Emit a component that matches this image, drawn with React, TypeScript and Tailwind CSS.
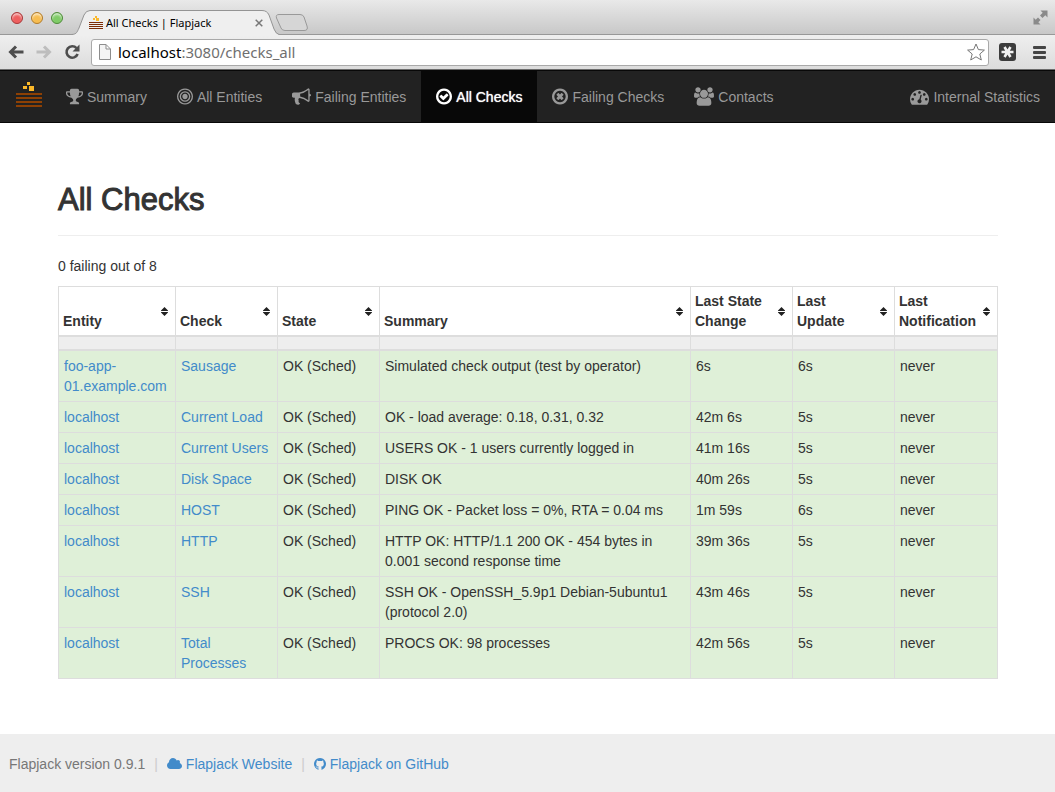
import type { ReactNode } from 'react';

const PATHS = {
  trophy:
    'M522 883q-74-162-74-371h-256v96q0 78 94.500 162t235.500 113zm1078-275v-96h-256q0 209-74 371 141-29 235.500-113t94.500-162zm128-128v128q0 71-41.500 143t-112 130-173 97.500-215.500 44.500q-42 54-95 95-38 34-52.500 72.500t-14.500 89.500q0 54 30.500 91t97.500 37q75 0 133.500 45.500t58.500 114.500v64q0 14-9 23t-23 9h-832q-14 0-23-9t-9-23v-64q0-69 58.500-114.500t133.500-45.500q67 0 97.500-37t30.500-91q0-51-14.500-89.500t-52.500-72.500q-53-41-95-95-113-5-215.500-44.500t-173-97.500-112-130-41.500-143v-128q0-40 28-68t68-28h288v-96q0-66 47-113t113-47h576q66 0 113 47t47 113v96h288q40 0 68 28t28 68z',
  bullseye:
    'M1152 896q0 106-75 181t-181 75-181-75-75-181 75-181 181-75 181 75 75 181zm128 0q0-159-112.500-271.500t-271.500-112.500-271.500 112.500-112.500 271.500 112.500 271.500 271.500 112.500 271.500-112.500 112.500-271.500zm128 0q0 212-150 362t-362 150-362-150-150-362 150-362 362-150 362 150 150 362zm128 0q0-130-51-248.500t-136.500-204-204-136.500-248.500-51-248.500 51-204 136.500-136.500 204-51 248.500 51 248.500 136.500 204 204 136.500 248.500 51 248.500-51 204-136.500 136.500-204 51-248.500zm128 0q0 209-103 385.500t-279.500 279.500-385.500 103-385.500-103-279.500-279.500-103-385.500 103-385.500 279.500-279.500 385.500-103 385.500 103 279.500 279.500 103 385.500z',
  bullhorn:
    'M1664 640q53 0 90.500 37.500t37.500 90.500-37.500 90.500-90.500 37.500v384q0 52-38 90t-90 38q-417-347-812-380-58 19-91 66t-31 100.500 40 92.500q-20 33-23 65.500t6 58 33.500 55 48 50 61.500 50.500q-29 58-111.500 83t-168.500 11.500-132-55.500q-7-23-29.500-87.500t-32-94.500-23-89-15-101 3.500-98 22-110.500h-122q-66 0-113-47t-47-113v-192q0-66 47-113t113-47h480q435 0 896-384 52 0 90 38t38 90v384zm-128 604v-954q-394 302-768 343v270q377 42 768 341z',
  check:
    'M1299 813l-422 422q-19 19-45 19t-45-19l-294-294q-19-19-19-45t19-45l102-102q19-19 45-19t45 19l147 147 275-275q19-19 45-19t45 19l102 102q19 19 19 45t-19 45zm141 83q0-148-73-273t-198-198-273-73-273 73-198 198-73 273 73 273 198 198 273 73 273-73 198-198 73-273zm224 0q0 209-103 385.500t-279.500 279.500-385.500 103-385.500-103-279.500-279.500-103-385.500 103-385.500 279.500-279.500 385.500-103 385.500 103 279.500 279.500 103 385.500z',
  times:
    'M1225 1079l-146 146q-10 10-23 10t-23-10l-137-137-137 137q-10 10-23 10t-23-10l-146-146q-10-10-10-23t10-23l137-137-137-137q-10-10-10-23t10-23l146-146q10-10 23-10t23 10l137 137 137-137q10-10 23-10t23 10l146 146q10 10 10 23t-10 23l-137 137 137 137q10 10 10 23t-10 23zM1440 896q0-148-73-273t-198-198-273-73-273 73-198 198-73 273 73 273 198 198 273 73 273-73 198-198 73-273zm224 0q0 209-103 385.500t-279.500 279.500-385.500 103-385.500-103-279.500-279.500-103-385.500 103-385.500 279.500-279.500 385.500-103 385.500 103 279.500 279.500 103 385.500z',
  users:
    'M593 896q-162 5-265 128h-134q-82 0-138-40.500t-56-118.500q0-353 124-353 6 0 43.500 21t97.500 42.500 119 21.500q67 0 133-23-5 37-5 66 0 139 81 256zm1071 637q0 120-73 189.500t-194 69.500h-874q-121 0-194-69.500t-73-189.500q0-53 3.500-103.500t14-109 26.500-108.500 43-97.500 62-81 85.500-53.500 111.500-20q10 0 43 21.500t73 48 107 48 135 21.500 135-21.500 107-48 73-48 43-21.500q61 0 111.500 20t85.500 53.500 62 81 43 97.500 26.500 108.500 14 109 3.500 103.500zm-1024-1277q0 106-75 181t-181 75-181-75-75-181 75-181 181-75 181 75 75 181zm704 384q0 159-112.500 271.500t-271.500 112.500-271.500-112.500-112.500-271.500 112.500-271.500 271.500-112.500 271.500 112.500 112.500 271.500zm576 225q0 78-56 118.500t-138 40.500h-134q-103-123-265-128 81-117 81-256 0-29-5-66 66 23 133 23 59 0 119-21.500t97.500-42.500 43.500-21q124 0 124 353zm-128-609q0 106-75 181t-181 75-181-75-75-181 75-181 181-75 181 75 75 181z',
  gauge:
    'M384 1152q0-53-37.500-90.500t-90.500-37.500-90.500 37.500-37.500 90.500 37.500 90.500 90.500 37.500 90.500-37.500 37.500-90.500zm192-448q0-53-37.500-90.500t-90.500-37.500-90.500 37.500-37.500 90.500 37.500 90.500 90.500 37.500 90.500-37.500 37.500-90.500zm428 481l101-382q6-26-7.500-48.500t-38.500-29.500-48 6.500-30 39.500l-101 382q-60 5-107 43.500t-63 98.500q-20 77 20 146t117 89 146-20 89-117q16-60-6-117t-72-91zm660-33q0-53-37.500-90.500t-90.500-37.500-90.500 37.500-37.500 90.500 37.500 90.500 90.500 37.500 90.500-37.500 37.500-90.500zm-640-640q0-53-37.500-90.500t-90.500-37.500-90.500 37.500-37.500 90.500 37.500 90.500 90.500 37.500 90.500-37.500 37.500-90.500zm448 192q0-53-37.500-90.500t-90.500-37.500-90.500 37.500-37.500 90.500 37.500 90.500 90.500 37.500 90.500-37.500 37.500-90.500zm320 448q0 261-141 483-19 29-54 29h-1402q-35 0-54-29-141-221-141-483 0-182 71-348t191-286 286-191 348-71 348 71 286 191 191 286 71 348z',
  cloud:
    'M1984 1152q0 159-112.500 271.500t-271.500 112.500h-1088q-185 0-316.500-131.500t-131.500-316.500q0-132 71-241.500t187-163.500q-2-28-2-43 0-212 150-362t362-150q158 0 286.500 88t187.500 230q70-62 166-62 106 0 181 75t75 181q0 75-41 138 129 30 213 134.500t84 239.500z',
  github:
    'M896 128q209 0 385.500 103t279.500 279.500 103 385.500q0 251-146.500 451.500t-378.500 277.500q-27 5-40-7t-13-30q0-3 .5-76.500t.5-134.500q0-97-52-142 57-6 102.500-18t94-39 81-66.500 53-105 20.500-150.500q0-119-79-206 37-91-8-204-28-9-81 11t-92 44l-38 24q-93-26-192-26t-192 26q-16-11-42.500-27t-83.500-38.500-85-13.500q-45 113-8 204-79 87-79 206 0 85 20.500 150t52.500 105 80.500 67 94 39 102.500 18q-39 36-49 103-21 10-45 15t-57 5-65.500-21.500-55.500-62.500q-19-32-48.500-52t-49.500-24l-20-3q-21 0-29 4.500t-5 11.500 9 14 13 12l7 5q22 10 43.500 38t31.500 51l10 23q13 38 44 61.500t67 30 69.500 7 55.500-3.500l23-4q0 38 .5 88.500t.5 54.500q0 18-13 30t-40 7q-232-77-378.500-277.500t-146.500-451.500q0-209 103-385.500t279.500-279.500 385.500-103z',
};

function Glyph({ name, box, className }: { name: keyof typeof PATHS; box: string; className: string }) {
  return (
    <svg viewBox={box} className={`shrink-0 fill-current ${className}`} aria-hidden="true">
      <path d={PATHS[name]} />
    </svg>
  );
}

function PancakeLogo({ className, cake }: { className: string; cake: string }) {
  return (
    <svg viewBox="0 0 26 26" className={className} shapeRendering="crispEdges" aria-hidden="true">
      <g fill={cake}>
        <rect y="11" width="26" height="2" />
        <rect y="15" width="26" height="2" />
        <rect y="19" width="26" height="2" />
        <rect y="23" width="26" height="2" />
      </g>
      <g fill="#fbb829">
        <rect x="11" y="0" width="3" height="3" />
        <rect x="7" y="4" width="4" height="3" />
        <rect x="13" y="4" width="5" height="5" />
      </g>
    </svg>
  );
}

function Light({ className }: { className: string }) {
  return <span className={`h-3 w-3 rounded-full border shadow-[inset_0_2px_2px_rgba(255,255,255,0.6)] ${className}`} />;
}

function BrowserChrome() {
  return (
    <div className="font-['Noto_Sans',sans-serif]">
      <div className="flex h-[35px] items-end border-b border-[#989898] bg-linear-to-b from-[#e9e9e9] to-[#c8c8c8]">
        <div className="flex gap-2 self-center pt-px pl-[11px]">
          <Light className="border-[#a5393a] bg-[#ee5f5f]" />
          <Light className="border-[#b07b2c] bg-[#f7bd51]" />
          <Light className="border-[#4f8a3b] bg-[#80cc68]" />
        </div>
        <div className="relative -mb-px ml-[9px] h-[25px] w-[207px]">
          <svg viewBox="0 0 207 25" className="absolute inset-0 h-full w-full" aria-hidden="true">
            <path d="M0 24.500C5 24 5 22 7 18L12 5Q14 .5 18 .5H190Q195 .5 197 5L202 19Q204 24 207 24.500V25H0z" fill="#efefef" />
            <path d="M0 24.500C5 24 5 22 7 18L12 5Q14 .5 18 .5H190Q195 .5 197 5L202 19Q204 24 207 24.500" fill="none" stroke="#949494" />
          </svg>
          <div className="relative flex h-full items-center pr-4 pl-[17px] text-[11px] text-black">
            <PancakeLogo className="mr-[3px] h-[14px] w-[14px]" cake="#7c2d07" />
            <span className="grow whitespace-nowrap">All Checks | Flapjack</span>
            <button type="button" aria-label="Close tab">
              <svg viewBox="0 0 8 8" className="h-2 w-2" stroke="#777" strokeWidth="1.500">
                <path d="M.7 .7l6.600 6.600M7.300 .7l-6.600 6.600" />
              </svg>
            </button>
          </div>
        </div>
        <button type="button" aria-label="New tab" className="-ml-1 mb-[3px]">
          <svg viewBox="0 0 34 17" className="h-[17px] w-[34px]" aria-hidden="true">
            <path d="M4 .5H25Q28 .5 29 3L32 12Q33.500 16.500 29 16.500H10Q7 16.500 6 14L1.500 4Q.5 .5 4 .5z" fill="#d6d6d6" stroke="#999" />
          </svg>
        </button>
        <button type="button" aria-label="Full screen" className="mr-[7px] ml-auto self-center">
          <svg viewBox="0 0 15 15" className="h-[15px] w-[15px] fill-[#8a8a8a]" aria-hidden="true">
            <path d="M7.500 .5H14.500V7.500L12.300 5.300 9.500 8 7 5.500 9.700 2.700zM.5 7.500L2.700 9.700 5 7.500 7.500 10 5.300 12.300 7.500 14.500H.5z" />
          </svg>
        </button>
      </div>
      <div className="flex h-[35px] items-center border-b border-[#6c6c6c] bg-linear-to-b from-[#efefef] to-[#dcdcdc] pr-[9px] pl-2">
        <button type="button" aria-label="Back">
          <svg viewBox="0 0 16 16" className="h-4 w-4" fill="none" stroke="#4d4d4d" strokeWidth="3" aria-hidden="true">
            <path d="M15.500 8H3M8 2.500L2.500 8 8 13.500" />
          </svg>
        </button>
        <button type="button" aria-label="Forward" className="ml-3">
          <svg viewBox="0 0 16 16" className="h-4 w-4" fill="none" stroke="#bdbdbd" strokeWidth="3" aria-hidden="true">
            <path d="M.5 8H13M8 2.500L13.500 8 8 13.500" />
          </svg>
        </button>
        <button type="button" aria-label="Reload" className="ml-3">
          <svg viewBox="0 0 16 16" className="h-4 w-4" aria-hidden="true">
            <path d="M12.500 4.200A5.700 5.700 0 1 0 13.600 10" fill="none" stroke="#4d4d4d" strokeWidth="2.600" />
            <path d="M15.500 .5v7H8.500z" fill="#4d4d4d" />
          </svg>
        </button>
        <form className="ml-[11px] flex h-[27px] grow items-center rounded-[3px] border border-[#a9a9a9] bg-white px-[7px]">
          <svg viewBox="0 0 12 16" className="h-4 w-3 shrink-0" fill="#f4f4f4" stroke="#8d8d8d" aria-hidden="true">
            <path d="M.5 .5h6.500l4.500 4.500v10.500H.5zM7 .5V5h4.500" />
          </svg>
          <div className="ml-[7px] grow text-[15px] leading-5 whitespace-nowrap text-[#6f6f6f]">
            <span className="text-black">localhost</span>:3080/checks_all
          </div>
          <button type="button" aria-label="Bookmark">
            <svg viewBox="0 0 18 18" className="-mr-1 h-[18px] w-[18px]" fill="#fff" stroke="#777" strokeLinejoin="round" aria-hidden="true">
              <path d="M9 1l2.400 5.600 6 .5-4.600 3.900 1.500 6L9 13.800l-5.300 3.200 1.500-6L.6 7.100l6-.5z" />
            </svg>
          </button>
        </form>
        <button type="button" aria-label="Extension" className="ml-[10px]">
          <svg viewBox="0 0 17 18" className="h-[18px] w-[17px]" aria-hidden="true">
            <rect width="17" height="18" rx="3" fill="#3c3c3c" />
            <path d="M2.500 9h12M5.500 4l6 10M11.500 4l-6 10" stroke="#f2f2f2" strokeWidth="2.600" />
          </svg>
        </button>
        <button type="button" aria-label="Menu" className="ml-[17px]">
          <svg viewBox="0 0 13 13" className="h-[13px] w-[13px] fill-[#454545]" aria-hidden="true">
            <rect width="13" height="3" rx="1" />
            <rect y="5" width="13" height="3" rx="1" />
            <rect y="10" width="13" height="3" rx="1" />
          </svg>
        </button>
      </div>
    </div>
  );
}

function NavLink({ icon, children, active = false }: { icon: ReactNode; children: ReactNode; active?: boolean }) {
  return (
    <a
      href="#"
      className={`flex h-[51px] items-center gap-1 px-[15px] whitespace-nowrap ${
        active ? 'bg-[#080808] text-white [text-shadow:0_0_1px_#fff]' : 'text-[#999]'
      }`}
    >
      {icon}
      {children}
    </a>
  );
}

function Navbar() {
  return (
    <nav className="flex items-center border-t border-b border-[#080808] bg-[#222]">
      <a href="#" aria-label="Flapjack" className="mr-[9px] ml-4 pb-1">
        <PancakeLogo className="h-[26px] w-[26px]" cake="#8d4004" />
      </a>
      <NavLink icon={<Glyph name="trophy" box="64 0 1664 1792" className="h-[19px] w-[17px]" />}>Summary</NavLink>
      <NavLink icon={<Glyph name="bullseye" box="128 0 1536 1792" className="h-[19px] w-4" />}>All Entities</NavLink>
      <NavLink icon={<Glyph name="bullhorn" box="0 0 1792 1792" className="h-[19px] w-[19px]" />}>Failing Entities</NavLink>
      <NavLink active icon={<Glyph name="check" box="128 0 1536 1792" className="h-[19px] w-4" />}>
        All Checks
      </NavLink>
      <NavLink icon={<Glyph name="times" box="128 0 1536 1792" className="h-[19px] w-4" />}>Failing Checks</NavLink>
      <NavLink icon={<Glyph name="users" box="0 0 1920 1792" className="h-[19px] w-5" />}>Contacts</NavLink>
      <div className="ml-auto">
        <NavLink icon={<Glyph name="gauge" box="0 0 1792 1792" className="h-[19px] w-[19px]" />}>Internal Statistics</NavLink>
      </div>
    </nav>
  );
}

const COLUMNS = [
  { label: 'Entity', width: 'w-[117px]' },
  { label: 'Check', width: 'w-[102px]' },
  { label: 'State', width: 'w-[102px]' },
  { label: 'Summary', width: '' },
  { label: 'Last State Change', width: 'w-[102px]' },
  { label: 'Last Update', width: 'w-[102px]' },
  { label: 'Last Notification', width: 'w-[103px]' },
];

const CHECKS = [
  ['foo-app-01.example.com', 'Sausage', 'Simulated check output (test by operator)', '6s', '6s'],
  ['localhost', 'Current Load', 'OK - load average: 0.18, 0.31, 0.32', '42m 6s', '5s'],
  ['localhost', 'Current Users', 'USERS OK - 1 users currently logged in', '41m 16s', '5s'],
  ['localhost', 'Disk Space', 'DISK OK', '40m 26s', '5s'],
  ['localhost', 'HOST', 'PING OK - Packet loss = 0%, RTA = 0.04 ms', '1m 59s', '6s'],
  ['localhost', 'HTTP', 'HTTP OK: HTTP/1.1 200 OK - 454 bytes in 0.001 second response time', '39m 36s', '5s'],
  ['localhost', 'SSH', 'SSH OK - OpenSSH_5.9p1 Debian-5ubuntu1 (protocol 2.0)', '43m 46s', '5s'],
  ['localhost', 'Total Processes', 'PROCS OK: 98 processes', '42m 56s', '5s'],
];

const CELL = 'border border-[#ddd] p-[5px] align-top';

function ChecksTable() {
  return (
    <table className="mt-[10px] w-full table-fixed border-collapse border border-[#ddd]">
      <colgroup>
        {COLUMNS.map((c) => (
          <col key={c.label} className={c.width} />
        ))}
      </colgroup>
      <thead>
        <tr>
          {COLUMNS.map((c) => (
            <th key={c.label} className="border border-b-2 border-[#ddd] p-1 text-left align-bottom font-bold">
              <div className="flex items-end justify-between gap-1">
                <span>{c.label}</span>
                <svg viewBox="0 0 7 9" className="mr-[3px] mb-[15px] h-[9px] w-[7px] shrink-0 fill-[#222]" aria-hidden="true">
                  <path d="M3.500 0L7.500 4H-.5zM-.5 5h8L3.500 9z" />
                </svg>
              </div>
            </th>
          ))}
        </tr>
        <tr>
          {COLUMNS.map((c) => (
            <td key={c.label} className="h-[14px] border border-b-2 border-[#ddd] bg-[#eee] p-0" />
          ))}
        </tr>
      </thead>
      <tbody className="bg-[#dff0d8]">
        {CHECKS.map(([entity, check, summary, changed, updated]) => (
          <tr key={check}>
            <td className={CELL}>
              <a href="#" className="text-[#428bca]">
                {entity}
              </a>
            </td>
            <td className={CELL}>
              <a href="#" className="text-[#428bca]">
                {check}
              </a>
            </td>
            <td className={CELL}>OK (Sched)</td>
            <td className={CELL}>{summary}</td>
            <td className={CELL}>{changed}</td>
            <td className={CELL}>{updated}</td>
            <td className={CELL}>never</td>
          </tr>
        ))}
      </tbody>
    </table>
  );
}

export default function App() {
  return (
    <div className="flex min-h-screen flex-col bg-white font-['Liberation_Sans',Arial,sans-serif] text-[14px] leading-5 text-[#333]">
      <BrowserChrome />
      <Navbar />
      <main className="grow pt-[60px] pr-[57px] pb-[54px] pl-[58px]">
        <h1 className="border-b border-[#eee] pb-[19px] text-[31px] leading-[33px] [-webkit-text-stroke:1px_#333]">All Checks</h1>
        <p className="mt-5">0 failing out of 8</p>
        <ChecksTable />
      </main>
      <footer className="flex h-[58px] items-center bg-[#eee] px-[9px] pt-[2px] text-[#777]">
        <span>Flapjack version 0.9.1</span>
        <span className="mx-[9px] text-[#ccc]">|</span>
        <a href="#" className="flex items-center gap-1 text-[#428bca]">
          <Glyph name="cloud" box="64 0 1920 1792" className="h-[14px] w-[15px]" />
          Flapjack Website
        </a>
        <span className="mx-[9px] text-[#ccc]">|</span>
        <a href="#" className="flex items-center gap-1 text-[#428bca]">
          <Glyph name="github" box="128 0 1536 1792" className="h-[14px] w-3" />
          Flapjack on GitHub
        </a>
      </footer>
    </div>
  );
}
